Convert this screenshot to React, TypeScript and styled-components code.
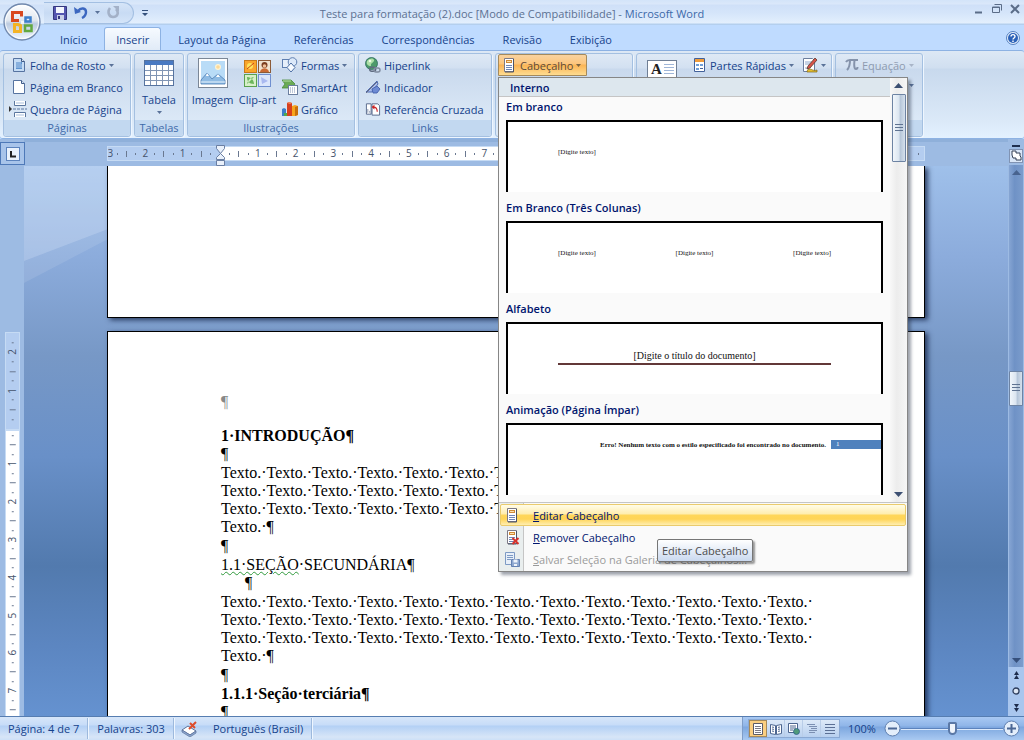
import React from "react";
import styled, { createGlobalStyle, css } from "styled-components";

const UI = '"Open Sans", "Noto Sans", sans-serif';
const SERIF = '"Liberation Serif", serif';

const Global = createGlobalStyle`
  * { box-sizing: border-box; }
  html, body { margin: 0; }
  body { font-family: ${UI}; font-size: 11px; color: #15428b; overflow: hidden; }
  button { font: inherit; color: inherit; background: none; border: 0; padding: 0; margin: 0; text-align: left; cursor: default; }
  h1, h2, h3, p, ul { margin: 0; padding: 0; font: inherit; }
  svg { display: block; flex: none; }
`;

const Window = styled.div`
  position: relative;
  display: flex;
  flex-direction: column;
  height: 100vh;
  background: #bfdbff;
`;

/* ---------- title bar ---------- */

const TitleBar = styled.header`
  flex: none;
  display: grid;
  grid-template-columns: 1fr auto 1fr;
  align-items: center;
  height: 25px;
  padding: 0 4px 0 44px;
  background: linear-gradient(#d3e4f9 0, #dbe8fa 4px, #cfe0f8 5px, #d5e5fa 13px, #e3effd 23px, #b4cfee 24px);
`;

const QuickAccess = styled.div`
  display: flex;
  align-items: center;
  gap: 8px;
`;

const QuickPill = styled.div`
  display: flex;
  align-items: center;
  gap: 7px;
  width: 90px;
  height: 22px;
  padding-left: 9px;
  border: 1px solid #a3bfe2;
  border-left: 0;
  border-radius: 0 11px 11px 0;
  background: linear-gradient(#d6e5f8, #c8dbf4 50%, #d5e5f9);
`;

const WindowTitle = styled.h1`
  margin-left: -40px;
  padding-top: 3px;
  white-space: nowrap;
  font-size: 11px;
  line-height: 18px;
  color: #5c7192;
  span { color: #3c68a8; }
`;

const WindowButtons = styled.div`
  display: flex;
  justify-content: flex-end;
  gap: 8px;
  padding-bottom: 7px;
`;

const OfficeButton = styled.button`
  position: absolute;
  left: 2px;
  top: 2px;
  z-index: 3;
`;

/* ---------- tabs ---------- */

const TabBar = styled.nav`
  flex: none;
  display: flex;
  align-items: flex-end;
  height: 25px;
  padding: 0 4px 0 46px;
  background: #bfdbff;
`;

const Tab = styled.button<{ $active?: boolean }>`
  height: 23px;
  padding: 2px 14px 0;
  line-height: 18px;
  white-space: nowrap;
  ${(p) =>
    p.$active &&
    css`
      margin: 0 3px 0 3px;
      padding: 1px 11px 0;
      border: 1px solid #8db2e3;
      border-bottom: 0;
      border-radius: 3px 3px 0 0;
      background: linear-gradient(#f6faff, #e1ebf7);
    `}
`;

const HelpButton = styled.button`
  margin: 0 0 5px auto;
`;

/* ---------- ribbon ---------- */

const Ribbon = styled.section`
  flex: none;
  display: flex;
  gap: 3px;
  height: 89px;
  padding: 2px 3px 1px;
  border: 1px solid #8db2e3;
  border-width: 1px 0;
  border-radius: 3px;
  background: linear-gradient(#dde8f5 0, #d0dff0 17px, #c8d9ed 18px, #dbe9f8 70px, #e3f1ff);
`;

const Group = styled.div<{ $w: number }>`
  flex: none;
  display: flex;
  flex-direction: column;
  width: ${(p) => p.$w}px;
  border: 1px solid #a4c0e1;
  border-radius: 3px;
  box-shadow: 1px 1px 0 #eef6ff;
  background: linear-gradient(#dfe9f5 0, #d2e0f1 14px, #c9d9ed 15px, #dce9f7 68px);
`;

const GroupBody = styled.div`
  flex: 1;
  min-height: 0;
  display: flex;
  padding: 0 2px;
`;

const GroupLabel = styled.div`
  flex: none;
  height: 16px;
  line-height: 16px;
  text-align: center;
  color: #3e6aaa;
  background: #c2d8f0;
  border-radius: 0 0 3px 3px;
`;

const Stack = styled.div<{ $pad?: number }>`
  display: flex;
  flex-direction: column;
  padding-left: ${(p) => p.$pad ?? 0}px;
`;

const SmallButton = styled.button<{ $off?: boolean; $open?: boolean }>`
  display: flex;
  align-items: center;
  gap: 3px;
  height: 22px;
  white-space: nowrap;
  color: ${(p) => (p.$off ? "#8e9bb0" : "#15428b")};
  ${(p) =>
    p.$open &&
    css`
      width: 89px;
      padding: 0 2px;
      color: #5c4a3a;
      border: 1px solid #a58a5c;
      border-radius: 2px 2px 0 0;
      background: linear-gradient(#f8d3a0 0, #fcc57c 9px, #fbb454 10px, #fedc90);
    `}
`;

const LargeButton = styled.button<{ $w: number }>`
  display: flex;
  flex-direction: column;
  align-items: center;
  justify-content: flex-start;
  width: ${(p) => p.$w}px;
  padding-top: 3px;
  white-space: nowrap;
  line-height: 16px;
`;

const LargeIcon = styled.span`
  display: flex;
  align-items: center;
  height: 32px;
  margin-bottom: 3px;
`;

const LargeLabel = styled.span`
  margin-bottom: 3px;
`;

const RowGroup = styled.div<{ $pad: number }>`
  display: flex;
  align-items: flex-start;
  padding-left: ${(p) => p.$pad}px;
  gap: 8px;
`;

const TextBoxButton = styled.button`
  margin: 6px 6px 0 0;
`;

const MoreArrow = styled.button`
  align-self: flex-end;
  padding: 8px 0;
`;

const MenuAnchor = styled.div`
  position: relative;
`;

/* ---------- gallery menu ---------- */

const Menu = styled.div`
  position: absolute;
  top: 23px;
  left: 0;
  z-index: 5;
  width: 410px;
  border: 1px solid #868686;
  background: #fafafa;
  box-shadow: 3px 3px 3px rgba(40, 50, 70, 0.45);
  color: #00156e;
`;

const GalleryArea = styled.div`
  display: flex;
  border-bottom: 1px solid #c5c5c5;
`;

const Gallery = styled.div`
  flex: 1;
  height: 424px;
  overflow: hidden;
`;

const GalleryHeader = styled.div`
  height: 19px;
  padding-left: 11px;
  line-height: 19px;
  font-weight: 600;
  background: #dde7ee;
  border-bottom: 1px solid #c5c5c5;
`;

const Choice = styled.button`
  display: flex;
  flex-direction: column;
  justify-content: flex-start;
  width: 100%;
  height: 101px;
  padding: 0 7px 0 7px;
`;

const ChoiceName = styled.span`
  display: block;
  height: 23px;
  line-height: 20px;
  font-weight: 600;
`;

const Preview = styled.span<{ $pad?: string }>`
  display: flex;
  align-self: stretch;
  justify-content: space-between;
  align-items: flex-start;
  height: 72px;
  padding: ${(p) => p.$pad ?? "23px 50px 0"};
  border: 2px solid #000;
  border-bottom: 0;
  background: #fff;
  color: #111;
  font: 7px/14px ${SERIF};
`;

const PreviewTitle = styled.span`
  flex: 1;
  border-bottom: 2px solid #623838;
  text-align: center;
  font-size: 10px;
`;

const PreviewError = styled.b`
  flex: 1;
  text-align: right;
  padding-right: 5px;
  white-space: nowrap;
`;

const PreviewNumber = styled.span`
  width: 50px;
  height: 9px;
  margin-top: 2px;
  padding-left: 5px;
  line-height: 9px;
  color: #fff;
  background: #4f81bd;
`;

const GalleryScroll = styled.div`
  display: flex;
  flex-direction: column;
  align-items: center;
  width: 17px;
  padding: 5px 0 5px;
  background: linear-gradient(90deg, #f8f8f8, #ececec 40%, #f6f6f6);
`;

const ScrollThumb = styled.div<{ $h: number; $gap?: number }>`
  display: flex;
  align-items: center;
  justify-content: center;
  flex: none;
  width: 14px;
  height: ${(p) => p.$h}px;
  margin-top: ${(p) => p.$gap ?? 0}px;
  border: 1px solid #6d83a3;
  border-radius: 1px;
  background: linear-gradient(90deg, #f1f6fb, #dbe5f0 50%, #b5c5d8 60%, #d5e0ec);
`;

const Space = styled.div<{ $grow: number }>`
  flex: ${(p) => p.$grow} 0 0;
`;

const Commands = styled.div`
  padding: 1px 1px 1px;
  background: linear-gradient(90deg, #e9eeee 24px, #c5c5c5 24px, #c5c5c5 25px, #fafafa 25px);
`;

const Command = styled.button<{ $hot?: boolean; $off?: boolean }>`
  display: flex;
  align-items: center;
  gap: 13px;
  width: 100%;
  height: 22px;
  padding-left: 3px;
  border: 1px solid transparent;
  white-space: nowrap;
  color: ${(p) => (p.$off ? "#9a9a9a" : "#00156e")};
  ${(p) =>
    p.$hot &&
    css`
      border-color: #eacb6c;
      border-radius: 2px;
      background: linear-gradient(#fffce8 0, #ffedae 9px, #ffd65a 10px, #ffd456 14px, #ffeeb0);
    `}
`;

const Tooltip = styled.div`
  position: absolute;
  left: 158px;
  top: 461px;
  height: 23px;
  padding: 0 4px;
  border: 1px solid #767676;
  border-radius: 2px;
  line-height: 21px;
  white-space: nowrap;
  color: #4c4c4c;
  background: linear-gradient(#fff, #cad9ef);
  box-shadow: 2px 2px 2px rgba(0, 0, 0, 0.4);
`;

/* ---------- workspace ---------- */

const Workspace = styled.main`
  flex: 1;
  min-height: 0;
  display: grid;
  grid-template-columns: 24px minmax(0, 1fr) 16px;
  grid-template-rows: 27px minmax(0, 1fr);
  background: #9dbbe3;
`;

const TabStop = styled.button`
  display: flex;
  align-items: center;
  justify-content: center;
  width: 25px;
  height: 23px;
  margin-top: 3px;
  border: 1px solid #4e79b8;
  background: #a8c4ea;
`;

const RulerRow = styled.div`
  display: flex;
  justify-content: center;
  padding-top: 4px;
  border-top: 3px solid #8fb0da;
`;

const Ruler = styled.div`
  display: flex;
  width: 100%;
  max-width: 818px;
  height: 15px;
  font-size: 10px;
  color: #45536b;
  border: 1px solid #c6dbf4;
  position: relative;
`;

const RulerPart = styled.div<{ $w?: number; $white?: boolean }>`
  display: flex;
  align-items: center;
  overflow: hidden;
  line-height: 13px;
  ${(p) => (p.$w ? `flex: none; width: ${p.$w}px;` : "flex: 1;")}
  background: ${(p) => (p.$white ? "#fff" : "#b4cdf0")};
`;

const Mark = styled.span<{ $half?: boolean }>`
  flex: ${(p) => (p.$half ? 1 : 2)} 0 0;
  min-width: 0;
  display: flex;
  justify-content: center;
  align-items: center;
`;

const Tick = styled.i<{ $h: number }>`
  width: 1px;
  height: ${(p) => p.$h}px;
  background: #6a7890;
`;

const Indent = styled.div`
  position: absolute;
  left: 108px;
  top: -2px;
`;

const SideRuler = styled.div`
  display: flex;
  flex-direction: column;
  padding: 166px 4px 0 5px;
  overflow: hidden;
`;

const SidePart = styled.div<{ $h: number; $white?: boolean }>`
  flex: none;
  display: flex;
  flex-direction: column;
  align-items: center;
  height: ${(p) => p.$h}px;
  border: 1px solid #c6dbf4;
  font-size: 10px;
  color: #45536b;
  background: ${(p) => (p.$white ? "#fff" : "#b4cdf0")};
`;

const SideMark = styled(Mark)`
  transform: rotate(-90deg);
  line-height: 9px;
  min-height: 0;
`;

const Canvas = styled.div`
  position: relative;
  display: flex;
  flex-direction: column;
  align-items: center;
  gap: 13px;
  overflow: hidden;
  background: linear-gradient(#9fc0ea 0, #8cacdc 90px, #7798c6 190px, #6990c8 290px, #527aae 400px, #5c86c1 480px, #6592d0);
`;

const Glow = styled.svg`
  position: absolute;
  left: 0;
  top: 0;
`;

const Page = styled.article<{ $first?: boolean }>`
  position: relative;
  width: 100%;
  max-width: 818px;
  border: 1px solid #000;
  background: #fff;
  color: #000;
  box-shadow: 3px 2px 5px rgba(20, 35, 70, 0.8);
  font: 16px/18px ${SERIF};
  ${(p) =>
    p.$first
      ? "flex: none; height: 152px; border-top: 0;"
      : "flex: 1 0 auto; padding: 61px 108px 72px 113px;"}
`;

const PageHeader = styled.div`
  margin-bottom: 16px;
  color: #888;
`;

const Line = styled.p<{ $bold?: boolean; $indent?: boolean; $after?: boolean }>`
  font-weight: ${(p) => (p.$bold ? 700 : 400)};
  padding-left: ${(p) => (p.$indent ? 24 : 0)}px;
  margin-bottom: ${(p) => (p.$after ? 1 : 0)}px;
  white-space: pre;
`;

const Spelling = styled.span`
  text-decoration: underline wavy #2f9a3c 1px;
  text-underline-offset: 1px;
`;

const ScrollColumn = styled.div`
  grid-column: 3;
  grid-row: 1 / 3;
  display: flex;
  flex-direction: column;
  align-items: center;
  padding-top: 6px;
  background: #9dbbe3;
`;

const Track = styled.div`
  flex: 1;
  display: flex;
  flex-direction: column;
  align-items: center;
  width: 14px;
  padding: 5px 0 4px;
  background: linear-gradient(90deg, #86a5d3, #6f92c6 40%, #7b9ccc);
`;

const BrowseButtons = styled.div`
  display: flex;
  flex-direction: column;
  align-items: center;
  justify-content: space-around;
  width: 16px;
  height: 49px;
  background: #a9c6ee;
`;

/* ---------- status bar ---------- */

const StatusBar = styled.footer`
  flex: none;
  display: flex;
  align-items: center;
  height: 24px;
  border-top: 1px solid #567db1;
  background: linear-gradient(#d7e6f9 0, #c7dcf8 8px, #b3d0f5 9px, #d7e5f7 20px, #cde0f7);
`;

const StatusItem = styled.button`
  height: 21px;
  padding: 0 8px;
  line-height: 20px;
  white-space: nowrap;
  border-right: 1px solid #9db9dd;
  box-shadow: 1px 0 0 #eef6ff;
  &:not(:first-child) { padding-left: 9px; }
`;

const StatusIcon = styled.button`
  padding: 0 6px 0 7px;
`;

const ViewTools = styled.div`
  display: flex;
  align-items: center;
  height: 23px;
  margin-left: auto;
  padding: 0 4px 0 5px;
  border-left: 1px solid #7f9dc8;
  background: linear-gradient(#a9c9f3 0, #8fb5e8 9px, #7da7df 10px, #a9c9f1);
`;

const ViewSet = styled.div`
  display: flex;
  height: 19px;
  border: 1px solid #8aa9d4;
  background: linear-gradient(#dde9f8, #b8d0ef);
`;

const ViewButton = styled.button<{ $on?: boolean }>`
  display: flex;
  align-items: center;
  justify-content: center;
  width: 18px;
  border-right: 1px solid #b9cde8;
  ${(p) => p.$on && "background: #fbcf81; outline: 1px solid #a68a5a; outline-offset: -1px;"}
  &:last-child { border-right: 0; }
`;

const ZoomValue = styled.button`
  width: 44px;
  padding-left: 8px;
`;

const ZoomSlider = styled.input`
  appearance: none;
  width: 102px;
  height: 16px;
  margin: 0;
  background: linear-gradient(transparent 7px, #5c83bd 7px, #5c83bd 8px, #dbe9fb 8px, #dbe9fb 9px, transparent 9px);
  &::-webkit-slider-thumb {
    appearance: none;
    width: 9px;
    height: 13px;
    border: 2px solid #5a78a6;
    border-radius: 2px 2px 5px 5px;
    background: #eef4fc;
  }
`;

/* ---------- drawings ---------- */

const Down = ({ c = "#5a7299" }: { c?: string }) => (
  <svg width="5" height="3" viewBox="0 0 5 3"><path d="M0 0h5L2.500 3z" fill={c} /></svg>
);

const Sheet = ({ tint }: { tint: "blue" | "plain" | "header" | "parts" | "remove" | "save" }) => (
  <svg width="16" height="16" viewBox="0 0 16 16">
    {(tint === "blue" || tint === "plain") && (
      <><path d="M2.500 1.500h8l3 3v10h-11z" fill={tint === "blue" ? "#c5dcf5" : "#fff"} stroke="#5673a0" /><path d="M10.500 1.500v3h3" fill="#dce7f5" stroke="#3f5b88" /></>
    )}
    {tint === "blue" && <><rect x="5" y="5" width="6" height="7" fill="#5e93cf" /><path d="M5 6h5M5 8h6M5 10h6" stroke="#d9e9f9" strokeWidth=".7" /></>}
    {(tint === "header" || tint === "remove") && (
      <><path d="M3.500 1.500h9v13h-9z" fill="#fff" stroke="#7d7a86" /><path d="M12.500 2v13H4" fill="none" stroke="#4c5468" /><rect x="5.500" y="3.500" width="5" height="2" fill="#fbe3b4" stroke="#d08a35" /><path d="M5 8.500h6M5 10.500h6M5 12.500h6" stroke="#6f86b5" /></>
    )}
    {tint === "parts" && (
      <><path d="M3.500 1.500h10v13h-10z" fill="#fff" stroke="#42619a" /><rect x="4" y="2" width="9" height="3" fill="#ef9c3c" /><path d="M5 7h3v2H5zM9 7h3v2H9zM5 11h3v2H5z" fill="#6f9fd9" /><path d="M9 11.500h3" stroke="#42619a" /></>
    )}
    {tint === "remove" && <path d="M8.500 9l6 6M14.500 9l-6 6" stroke="#d8322b" strokeWidth="2" />}
    {tint === "save" && (
      <><path d="M1.500 1.500h9v12h-9z" fill="#e7eff9" stroke="#7d9ac4" /><path d="M3 4.500h6M3 6.500h6M3 8.500h4" stroke="#7d9ac4" /><path d="M7.500 8.500h8v7h-8z" fill="#8fa9d0" stroke="#6482b3" /><path d="M9.500 8.500h4v3h-4zM10 13h3v2h-3z" fill="#eef4fb" /></>
    )}
  </svg>
);

const BreakIcon = () => (
  <svg width="16" height="16" viewBox="0 0 16 16" overflow="visible">
    <path d="M-2 5l3 3-3 3z" fill="#333" />
    <path d="M3.500 0v4.500h11V0M3.500 16v-4.500h11V16" fill="#fff" stroke="#5b779f" />
    <path d="M2 8h14" stroke="#5b779f" strokeDasharray="3 1" /><path d="M5 2h8M5 14h8" stroke="#a9bfdc" />
  </svg>
);

const TableIcon = () => (
  <svg width="30" height="26" viewBox="0 0 30 26">
    <rect x=".5" y=".5" width="29" height="25" fill="#fff" stroke="#56739f" />
    <rect x="1" y="1" width="28" height="4" fill="#4a7ac2" />
    <path d="M1 10.500h28M1 15.500h28M1 20.500h28M6.500 5v20M12.500 5v20M18.500 5v20M24.500 5v20" stroke="#8095b4" />
  </svg>
);

const PictureIcon = () => (
  <svg width="30" height="30" viewBox="0 0 30 30">
    <rect x=".5" y=".5" width="29" height="29" fill="#fff" stroke="#7b8797" />
    <rect x="3" y="3" width="24" height="23" fill="#b9dcf7" />
    <circle cx="20" cy="9" r="3" fill="#fff4d2" /><circle cx="20" cy="9" r="1.800" fill="#fbd99a" />
    <path d="M3 22l6-7 5 6 6-5 7 6v4H3z" fill="#8fbbe3" stroke="#4d7db5" strokeWidth=".8" />
    <path d="M8 18l1-3 2 3zM18 19l2-3 2 3z" fill="#fff" /><path d="M3 24h24" stroke="#e9f4fd" />
  </svg>
);

const ClipArtIcon = () => (
  <svg width="27" height="27" viewBox="0 0 27 27">
    <rect x=".5" y=".5" width="12" height="12" fill="#f9a52c" stroke="#c77a1a" /><circle cx="6" cy="6" r="3" fill="#fde35b" /><path d="M3 9l7-6" stroke="#c9451c" />
    <rect x="14.500" y=".5" width="12" height="12" fill="#f0e3cf" stroke="#8c5b38" /><circle cx="20.500" cy="5" r="3" fill="#7b3f21" /><path d="M16 12c1-5 8-5 9 0z" fill="#c96a34" /><circle cx="20.500" cy="6" r="1.800" fill="#f0c198" />
    <rect x=".5" y="14.500" width="12" height="12" fill="#d7efc8" stroke="#5aa14e" /><path d="M3 17c5 0 7 4 7 7-5 0-7-3-7-7zM10 17c-3 0-6 3-7 7" fill="#6bb65c" />
    <rect x="14.500" y="14.500" width="12" height="12" fill="#dbe6fb" stroke="#6f8fd0" /><path d="M17 17l7 4-6 3z" fill="#a9b9f0" />
  </svg>
);

const ShapesIcon = () => (
  <svg width="16" height="16" viewBox="0 0 16 16">
    <rect x=".5" y="2.500" width="8" height="8" fill="#e6effa" stroke="#5f7fb0" /><circle cx="10.500" cy="5" r="4.300" fill="#dce9f9" stroke="#5f7fb0" />
    <path d="M9 6l4 4.500L9 15l-4-4.500z" fill="#f7fbff" stroke="#4e70a5" />
  </svg>
);

const SmartArtIcon = () => (
  <svg width="16" height="16" viewBox="0 0 16 16">
    <path d="M0 1h9l4 4-3 4H0l3-4z" fill="#6aaa55" stroke="#4a8a3b" strokeWidth=".8" /><path d="M1 2h8" stroke="#b8dea9" />
    <rect x="6.500" y="6.500" width="9" height="9" fill="#fff" stroke="#6b7f9f" /><path d="M8 9h6M8 11h6M8 13h6" stroke="#7f93b3" strokeDasharray="1 1" />
  </svg>
);

const ChartIcon = () => (
  <svg width="16" height="16" viewBox="0 0 16 16">
    <path d="M0 8l2-1 2 1v7H0z" fill="#3d7fc9" /><path d="M5 2l2-1 3 1v13H5z" fill="#d6401f" /><path d="M5 2l2-1 3 1-2 1z" fill="#f58a5f" />
    <path d="M10 5l3-1 3 1v9l-3 1h-3z" fill="#f7a51d" /><path d="M13 6v9l3-1V5z" fill="#c76f0c" /><path d="M2 12h3v3H2z" fill="#4faa4b" />
  </svg>
);

const LinkIcon = () => (
  <svg width="16" height="16" viewBox="0 0 16 16">
    <circle cx="6.500" cy="6.500" r="6" fill="#4d9a6b" stroke="#2b6a5d" strokeWidth=".8" /><path d="M2 4c3-3 6-3 7-1s-4 3-3 6c-3 0-5-2-4-5z" fill="#aee0a8" /><circle cx="5" cy="4" r="1.300" fill="#effbe9" />
    <rect x="4.700" y="10.200" width="6" height="4" rx="2" fill="none" stroke="#5f6b80" strokeWidth="1.400" /><rect x="9" y="11" width="6" height="4" rx="2" fill="none" stroke="#7f8b9f" strokeWidth="1.400" />
  </svg>
);

const BookmarkIcon = () => (
  <svg width="16" height="16" viewBox="0 0 16 16">
    <path d="M1 13L9 5l3-3 1 3-6 8z" fill="#a9bcec" stroke="#4461ab" strokeWidth=".9" /><path d="M7 10l5-3 3 3-3 4-4 0z" fill="#6d8ad3" stroke="#4461ab" strokeWidth=".9" /><path d="M1 14L12 3" stroke="#6a6f80" />
  </svg>
);

const CrossRefIcon = () => (
  <svg width="16" height="16" viewBox="0 0 17 16">
    <path d="M1.500 2.500h5v11h-5z" fill="#fff" stroke="#56688a" /><path d="M3 8v4M5 10v2" stroke="#8a97b0" />
    <path d="M7.500 2.500h6l2 2v10h-8z" fill="#fff" stroke="#56688a" /><path d="M13 11c0-4-2-5-4-5" fill="none" stroke="#c22" strokeWidth="1.200" /><path d="M10 3.500v5L7 6z" fill="#c22" />
  </svg>
);

const SignIcon = () => (
  <svg width="16" height="16" viewBox="0 0 16 16">
    <path d="M1.500 1.500h9l2 2v11h-11z" fill="#fff" stroke="#6c7e9e" /><path d="M3 5h7M3 7h5M3 11h3" stroke="#8fa7cb" />
    <path d="M13 1l2 2-7 8-3 1 1-3z" fill="#d9534a" stroke="#5b3a2c" strokeWidth=".8" /><path d="M5 14c3-5 5 1 10-1v2H5z" fill="#e8c02f" stroke="#7b641a" strokeWidth=".7" />
  </svg>
);

const TextBoxIcon = () => (
  <svg width="30" height="30" viewBox="0 0 30 30">
    <rect x=".5" y=".5" width="29" height="28" fill="#fff" stroke="#6f7f95" />
    <text x="4" y="14" fontFamily="Liberation Serif, serif" fontSize="15" fontWeight="700" fill="#222">A</text>
    <path d="M17 4.500h10M17 7.500h10M17 10.500h10M17 13.500h10" stroke="#9fb6d8" />
  </svg>
);

const OfficeLogo = () => (
  <svg width="40" height="40" viewBox="0 0 40 40">
    <defs>
      <linearGradient id="orb" x1="0" y1="0" x2="0" y2="1"><stop offset="0" stopColor="#fff" /><stop offset=".45" stopColor="#e2e8f0" /><stop offset=".55" stopColor="#bccbe0" /><stop offset="1" stopColor="#f2f8ff" /></linearGradient>
    </defs>
    <circle cx="20" cy="20" r="18" fill="url(#orb)" stroke="#7088ad" strokeWidth="1.300" />
    <circle cx="20" cy="20" r="16.500" fill="none" stroke="#fff" strokeWidth="1" opacity=".8" />
    <g fill="none" strokeWidth="3">
      <path d="M17 18.500h-6.500v-8h9v4" stroke="#d9481e" /><path d="M23.500 15.500h5v4h-5z" stroke="#3d7fcb" strokeWidth="2.500" />
      <path d="M16 22.500h-3.500v7h6v-6z" stroke="#f4b325" /><path d="M23 23.500h6.500v5.500h-6.500z" stroke="#62a840" strokeWidth="2.500" />
    </g>
    <path d="M19 19h3v3h-3z" fill="#fff" opacity=".8" />
  </svg>
);

const SaveIcon = () => (
  <svg width="14" height="14" viewBox="0 0 14 14">
    <path d="M.5.500h13v13h-13z" fill="#5456b0" stroke="#34377e" /><path d="M3 1h8v6H3z" fill="#f3f6fd" /><path d="M4 9h7v5H4z" fill="#c9d0e8" /><path d="M5 10h2v3H5z" fill="#34377e" />
  </svg>
);

const UndoIcon = () => (
  <svg width="14" height="13" viewBox="0 0 14 13"><path d="M4 5c3-4 8-3 8 1 0 3-2 5-4 6" fill="none" stroke="#3c67c0" strokeWidth="2.400" /><path d="M0 1l1 7 6-2z" fill="#3c67c0" /></svg>
);

const RedoIcon = () => (
  <svg width="13" height="13" viewBox="0 0 13 13"><path d="M3 2c-3 4-1 9 3 9 5 0 6-5 3-8" fill="none" stroke="#a3b1c8" strokeWidth="2.600" /><path d="M6 0h6v6z" fill="#a3b1c8" /></svg>
);

const ProofIcon = () => (
  <svg width="17" height="16" viewBox="0 0 17 16">
    <path d="M1 9l6-4 8 5-6 4z" fill="#fff" stroke="#5a7099" /><path d="M1 9v2l8 5 6-4v-2l-6 4z" fill="#8fa9d0" stroke="#5a7099" strokeWidth=".7" /><path d="M8 8L15 1M9 2l5 5" stroke="#dd4b2b" strokeWidth="2" />
  </svg>
);

const ViewIcon = ({ k }: { k: number }) => (
  <svg width="12" height="12" viewBox="0 0 12 12">
    {k === 0 && <><path d="M1.500.500h9v11h-9z" fill="#fff" stroke="#5b5b66" /><path d="M3 3.500h6M3 5.500h6M3 7.500h6M3 9.500h6" stroke="#7a7a86" /></>}
    {k === 1 && <><path d="M.5 1.500l5 1v9l-5-1zM11.500 1.500l-5 1v9l5-1z" fill="#fff" stroke="#4d6690" /><path d="M2 4l2 .4M2 6l2 .4M8 4.400l2-.4M8 6.400L10 6M2 8l2 .4M8 8.400L10 8" stroke="#4d6690" /></>}
    {k === 2 && <><path d="M.5.500h9v9h-9z" fill="#fff" stroke="#4d6690" /><path d="M2 3h6M2 5h6M2 7h3" stroke="#4d6690" /><circle cx="8.500" cy="8.500" r="3" fill="#4f9a7a" stroke="#2f5f8a" strokeWidth=".8" /></>}
    {k === 3 && <path d="M1 1.500h8M3 3.500h8M5 5.500h6M3 7.500h8M3 9.500h6" stroke="#7b8fb2" />}
    {k === 4 && <path d="M1 1.500h10M1 4.500h10M1 7.500h10M1 10.500h10" stroke="#5b6f94" />}
  </svg>
);

const ZoomIcon = ({ plus }: { plus?: boolean }) => (
  <svg width="17" height="17" viewBox="0 0 17 17">
    <circle cx="8.500" cy="8.500" r="7.500" fill="#e3eefb" stroke="#5f7faf" /><path d={plus ? "M4 8.500h9M8.500 4v9" : "M4 8.500h9"} stroke="#4b6795" strokeWidth="2" />
  </svg>
);

const Grip = () => (
  <svg width="8" height="9" viewBox="0 0 8 9"><path d="M0 .5h8M0 3.500h8M0 6.500h8" stroke="#5f7391" /></svg>
);

const Arrow = ({ up, c = "#3c4f72" }: { up?: boolean; c?: string }) => (
  <svg width="9" height="5" viewBox="0 0 9 5"><path d={up ? "M0 5h9L4.500 0z" : "M0 0h9L4.500 5z"} fill={c} /></svg>
);

const Double = ({ up }: { up?: boolean }) => (
  <svg width="7" height="8" viewBox="0 0 7 8"><path d={up ? "M1 4h5L3.500 0zM1 8h5L3.500 4z" : "M1 0h5L3.500 4zM1 4h5L3.500 8z"} fill="#1d2c4c" /></svg>
);

/* ---------- rulers ---------- */

const marks = (from: number, to: number, step: number) => {
  const out: React.ReactNode[] = [];
  for (let q = from; step > 0 ? q <= to : q >= to; q += step) {
    const r = Math.abs(q) % 4;
    out.push(r === 0 ? Math.abs(q) / 4 : <Tick $h={r === 2 ? 6 : 2} />);
  }
  return out;
};

const fullLine = "Texto.·".repeat(13);

const Body = () => (
  <Line $after>{[fullLine, fullLine, fullLine, "Texto.·¶"].join("\n")}</Line>
);

const tabs = ["Início", "Inserir", "Layout da Página", "Referências", "Correspondências", "Revisão", "Exibição"];

export default function App() {
  return (
    <Window>
      <Global />
      <OfficeButton aria-label="Botão Office"><OfficeLogo /></OfficeButton>

      <TitleBar>
        <QuickAccess>
          <QuickPill>
            <button aria-label="Salvar"><SaveIcon /></button>
            <button aria-label="Desfazer"><UndoIcon /></button>
            <Down />
            <button aria-label="Refazer"><RedoIcon /></button>
          </QuickPill>
          <button aria-label="Personalizar">
            <svg width="6" height="6" viewBox="0 0 6 6"><path d="M0 0h6v1H0zM0 3h6L3 6z" fill="#34507c" /></svg>
          </button>
        </QuickAccess>
        <WindowTitle>
          Teste para formatação (2).doc [Modo de Compatibilidade] - <span>Microsoft Word</span>
        </WindowTitle>
        <WindowButtons>
          <button aria-label="Minimizar"><svg width="10" height="10"><path d="M1 8.500h7" stroke="#5b6d88" strokeWidth="2" /></svg></button>
          <button aria-label="Restaurar"><svg width="10" height="10"><path d="M2.500.500h7v6M.5 3h7v5.500h-7zM.5 3.500h7" fill="none" stroke="#5b6d88" /></svg></button>
          <button aria-label="Fechar"><svg width="10" height="10"><path d="M1 1l8 8M9 1L1 9" stroke="#5b6d88" strokeWidth="2" /></svg></button>
        </WindowButtons>
      </TitleBar>

      <TabBar>
        {tabs.map((t) => <Tab key={t} $active={t === "Inserir"}>{t}</Tab>)}
        <HelpButton aria-label="Ajuda">
          <svg width="14" height="14" viewBox="0 0 14 14"><circle cx="7" cy="7" r="6.500" fill="#e5effc" stroke="#5580c0" /><circle cx="7" cy="7" r="5" fill="#2c62b8" /><path d="M5 5.500c0-2.500 4-2.500 4 0C9 7 7 7 7 8.500M7 9.500V11" stroke="#fff" strokeWidth="1.400" fill="none" /></svg>
        </HelpButton>
      </TabBar>

      <Ribbon>
        <Group $w={128}>
          <GroupBody>
            <Stack $pad={5}>
              <SmallButton><Sheet tint="blue" />Folha de Rosto <Down /></SmallButton>
              <SmallButton><Sheet tint="plain" />Página em Branco</SmallButton>
              <SmallButton><BreakIcon />Quebra de Página</SmallButton>
            </Stack>
          </GroupBody>
          <GroupLabel>Páginas</GroupLabel>
        </Group>

        <Group $w={50}>
          <GroupBody>
            <LargeButton $w={44}><LargeIcon><TableIcon /></LargeIcon><LargeLabel>Tabela</LargeLabel><Down /></LargeButton>
          </GroupBody>
          <GroupLabel>Tabelas</GroupLabel>
        </Group>

        <Group $w={168}>
          <GroupBody>
            <LargeButton $w={45}><LargeIcon><PictureIcon /></LargeIcon><LargeLabel>Imagem</LargeLabel></LargeButton>
            <LargeButton $w={45}><LargeIcon><ClipArtIcon /></LargeIcon><LargeLabel>Clip-art</LargeLabel></LargeButton>
            <Stack $pad={2}>
              <SmallButton><ShapesIcon />Formas <Down /></SmallButton>
              <SmallButton><SmartArtIcon />SmartArt</SmallButton>
              <SmallButton><ChartIcon />Gráfico</SmallButton>
            </Stack>
          </GroupBody>
          <GroupLabel>Ilustrações</GroupLabel>
        </Group>

        <Group $w={134}>
          <GroupBody>
            <Stack $pad={4}>
              <SmallButton><LinkIcon />Hiperlink</SmallButton>
              <SmallButton><BookmarkIcon />Indicador</SmallButton>
              <SmallButton><CrossRefIcon />Referência Cruzada</SmallButton>
            </Stack>
          </GroupBody>
          <GroupLabel>Links</GroupLabel>
        </Group>

        <Group $w={138}>
          <GroupBody>
            <MenuAnchor>
              <SmallButton $open aria-expanded="true"><Sheet tint="header" />Cabeçalho <Down c="#7a6340" /></SmallButton>
              <Menu>
                <GalleryArea>
                  <Gallery>
                    <GalleryHeader>Interno</GalleryHeader>
                    <Choice>
                      <ChoiceName>Em branco</ChoiceName>
                      <Preview><span>[Digite texto]</span></Preview>
                    </Choice>
                    <Choice>
                      <ChoiceName>Em Branco (Três Colunas)</ChoiceName>
                      <Preview><span>[Digite texto]</span><span>[Digite texto]</span><span>[Digite texto]</span></Preview>
                    </Choice>
                    <Choice>
                      <ChoiceName>Alfabeto</ChoiceName>
                      <Preview $pad="25px 50px 0"><PreviewTitle>[Digite o título do documento]</PreviewTitle></Preview>
                    </Choice>
                    <Choice>
                      <ChoiceName>Animação (Página Ímpar)</ChoiceName>
                      <Preview $pad="13px 0 0">
                        <PreviewError>Erro! Nenhum texto com o estilo especificado foi encontrado no documento.</PreviewError>
                        <PreviewNumber>1</PreviewNumber>
                      </Preview>
                    </Choice>
                  </Gallery>
                  <GalleryScroll>
                    <Arrow up />
                    <ScrollThumb $h={68} $gap={6}><Grip /></ScrollThumb>
                    <Space $grow={1} />
                    <Arrow />
                  </GalleryScroll>
                </GalleryArea>
                <Commands>
                  <Command $hot><Sheet tint="header" /><span><u>E</u>ditar Cabeçalho</span></Command>
                  <Command><Sheet tint="remove" /><span><u>R</u>emover Cabeçalho</span></Command>
                  <Command $off disabled><Sheet tint="save" /><span><u>S</u>alvar Seleção na Galeria de Cabeçalhos...</span></Command>
                </Commands>
                <Tooltip role="tooltip">Editar Cabeçalho</Tooltip>
              </Menu>
            </MenuAnchor>
          </GroupBody>
        </Group>

        <Group $w={196}>
          <GroupBody>
            <RowGroup $pad={8}>
              <TextBoxButton aria-label="Caixa de Texto"><TextBoxIcon /></TextBoxButton>
              <SmallButton><Sheet tint="parts" />Partes Rápidas <Down /></SmallButton>
              <SmallButton aria-label="Linha de Assinatura"><SignIcon /><Down /></SmallButton>
            </RowGroup>
          </GroupBody>
        </Group>

        <Group $w={88}>
          <GroupBody>
            <Stack $pad={7}>
              <SmallButton $off disabled>
                <svg width="14" height="14" viewBox="0 0 14 14"><path d="M1 4c1-2 2-2 4-2h8M5 2c0 5-1 8-3 10M9.500 2c-.5 5-.5 9 1.500 9 1 0 1.500-1 1.500-2" fill="none" stroke="#8593ab" strokeWidth="2" /></svg>
                Equação <Down c="#a9b5c8" />
              </SmallButton>
              <MoreArrow aria-label="Símbolo"><Down /></MoreArrow>
            </Stack>
          </GroupBody>
          <GroupLabel />
        </Group>
      </Ribbon>

      <Workspace>
        <TabStop aria-label="Tabulação">
          <svg width="14" height="14" viewBox="0 0 14 14"><rect x=".5" y=".5" width="13" height="13" fill="#eaf2fc" stroke="#5c83bd" /><path d="M5 4v5.500h5" fill="none" stroke="#222" strokeWidth="2" /></svg>
        </TabStop>
        <RulerRow>
          <Ruler>
            <RulerPart $w={112}>
              {marks(12, 1, -1).map((m, i) => <Mark key={i} $half={i === 0}>{m}</Mark>)}
              <Mark $half />
            </RulerPart>
            <RulerPart $w={628} $white>
              <Mark $half />
              {marks(1, 65, 1).map((m, i) => <Mark key={i}>{m}</Mark>)}
              <Mark />
            </RulerPart>
            <RulerPart>
              {marks(69, 75, 1).map((m, i) => <Mark key={i}>{m}</Mark>)}
            </RulerPart>
            <Indent>
              <svg width="10" height="22" viewBox="0 0 10 22"><path d="M.5.500h8v3l-4 5-4-5zM4.500 8.500l4 4v2h-8v-2zM.5 15.500h8v5h-8z" fill="#eaf1fb" stroke="#6a7fa3" /></svg>
            </Indent>
          </Ruler>
        </RulerRow>

        <ScrollColumn>
          <svg width="16" height="20" viewBox="0 0 16 20">
            <path d="M4 1h8" stroke="#1f2f4f" strokeWidth="2" /><rect x="1.500" y="4.500" width="13" height="13" fill="#d9e6f7" stroke="#8093b3" />
            <path d="M4 6h4v2h4v3l1 1v3H8v-2H5L4 10z" fill="#fff" stroke="#333f55" />
          </svg>
          <Track>
            <Arrow up c="#48638f" />
            <Space $grow={195} />
            <ScrollThumb $h={35}><Grip /></ScrollThumb>
            <Space $grow={250} />
            <Arrow c="#36507c" />
          </Track>
          <BrowseButtons>
            <Double up />
            <svg width="8" height="8"><circle cx="4" cy="4" r="3" fill="#dce6f3" stroke="#2c3c5c" strokeWidth="1.300" /></svg>
            <Double />
          </BrowseButtons>
        </ScrollColumn>

        <SideRuler>
          <SidePart $h={98}>
            <Mark $half />
            {marks(9, 1, -1).map((m, i) => <SideMark key={i}>{m}</SideMark>)}
            <Mark $half />
          </SidePart>
          <SidePart $h={295} $white>
            {marks(1, 31, 1).map((m, i) => <SideMark key={i}>{m}</SideMark>)}
          </SidePart>
        </SideRuler>

        <Canvas>
          <Glow width="84" height="118" viewBox="0 0 84 118">
            <path d="M0 0h84v73L0 117z" fill="#fff" opacity=".1" />
            <path d="M0 0h84v63L0 95z" fill="#e8f3ff" opacity=".22" />
          </Glow>
          <Page $first />
          <Page>
            <PageHeader>¶</PageHeader>
            <Line $bold>1·INTRODUÇÃO¶</Line>
            <Line $after>¶</Line>
            <Body />
            <Line $after>¶</Line>
            <Line><Spelling>1.1·SEÇÃO</Spelling>·SECUNDÁRIA¶</Line>
            <Line $after $indent>¶</Line>
            <Body />
            <Line $after>¶</Line>
            <Line $bold>1.1.1·Seção·terciária¶</Line>
            <Line>¶</Line>
          </Page>
        </Canvas>
      </Workspace>

      <StatusBar>
        <StatusItem>Página: 4 de 7</StatusItem>
        <StatusItem>Palavras: 303</StatusItem>
        <StatusIcon aria-label="Revisão de texto"><ProofIcon /></StatusIcon>
        <StatusItem>Português (Brasil)</StatusItem>
        <ViewTools>
          <ViewSet>
            {[0, 1, 2, 3, 4].map((k) => (
              <ViewButton key={k} $on={k === 0} aria-label={`Modo de exibição ${k + 1}`}><ViewIcon k={k} /></ViewButton>
            ))}
          </ViewSet>
          <ZoomValue>100%</ZoomValue>
          <button aria-label="Reduzir"><ZoomIcon /></button>
          <ZoomSlider type="range" min={0} max={100} defaultValue={50} aria-label="Zoom" />
          <button aria-label="Ampliar"><ZoomIcon plus /></button>
        </ViewTools>
      </StatusBar>
    </Window>
  );
}
